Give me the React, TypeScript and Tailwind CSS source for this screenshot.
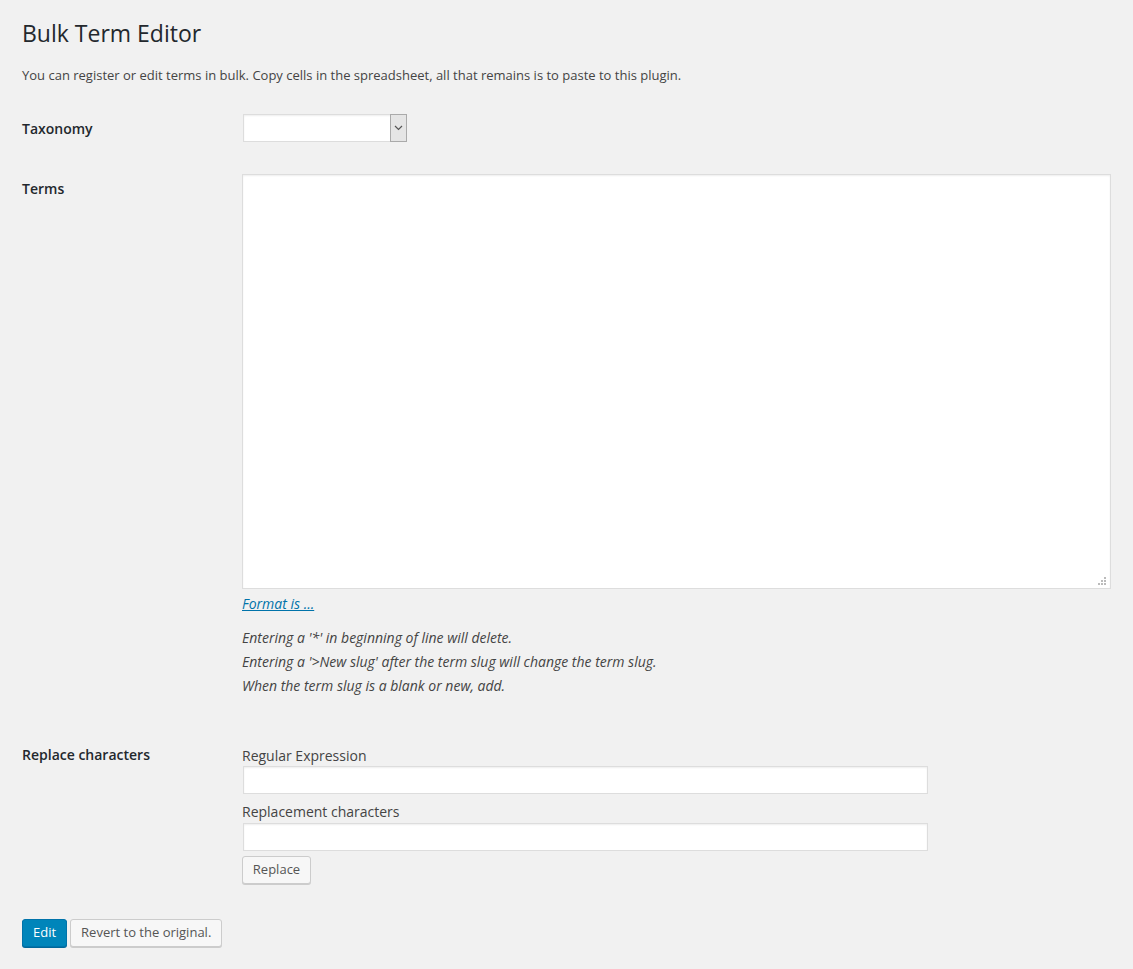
const labelCls = "w-[220px] shrink-0 text-[14px] font-semibold text-[#23282d]";

const App = () => {
  return (
    <div className="min-h-[969px] bg-[#f1f1f1] pl-[22px] pr-[22px] text-[#444] font-['Open_Sans',sans-serif] text-[13px]">
      <h1 className="pt-[19px] text-[23px] leading-[29px] font-normal text-[#23282d]">
        Bulk Term Editor
      </h1>
      <p className="mt-[17px] leading-[20px]">
        You can register or edit terms in bulk. Copy cells in the spreadsheet,
        all that remains is to paste to this plugin.
      </p>

      <div className="mt-[29px] flex">
        <div className={labelCls + " pt-[4px]"}>Taxonomy</div>
        <div className="ml-px flex h-[28px] w-[164px] border border-[#ddd] bg-white shadow-[inset_0_1px_2px_rgba(0,0,0,0.07)]">
          <div className="flex-1" />
          <div className="flex w-[17px] items-center justify-center border border-[#aaa] bg-[#e5e5e5] -my-px -mr-px">
            <svg width="9" height="6" viewBox="0 0 9 6">
              <path d="M1 1 L4.5 4.5 L8 1" stroke="#555" strokeWidth="1.2" fill="none" />
            </svg>
          </div>
        </div>
      </div>

      <div className="mt-[32px] flex">
        <div className={labelCls + " pt-[4px]"}>Terms</div>
        <div className="flex-1">
          <div className="relative h-[415px] w-[869px] border border-[#ddd] bg-white shadow-[inset_0_1px_2px_rgba(0,0,0,0.07)]">
            <svg className="absolute right-[3px] bottom-[2px]" width="9" height="9" viewBox="0 0 9 9">
              <rect x="6" y="0" width="2" height="2" fill="#bbb" />
              <rect x="3" y="3" width="2" height="2" fill="#bbb" />
              <rect x="6" y="3" width="2" height="2" fill="#bbb" />
              <rect x="0" y="6" width="2" height="2" fill="#bbb" />
              <rect x="3" y="6" width="2" height="2" fill="#bbb" />
              <rect x="6" y="6" width="2" height="2" fill="#bbb" />
            </svg>
          </div>
          <a href="#" className="mt-[4px] inline-block text-[14px] italic leading-[22px] text-[#0073aa] underline">
            Format is ...
          </a>
          <div className="mt-[11px] text-[14px] italic leading-[24px] text-[#444]">
            <p>Entering a '*' in beginning of line will delete.</p>
            <p>Entering a '&gt;New slug' after the term slug will change the term slug.</p>
            <p>When the term slug is a blank or new, add.</p>
          </div>
        </div>
      </div>

      <div className="mt-[47px] flex">
        <div className={labelCls + " -mt-px"}>Replace characters</div>
        <div className="flex flex-col">
          <label className="pt-px text-[14px] leading-[20px] text-[#444]">Regular Expression</label>
          <div className="ml-px h-[28px] w-[685px] border border-[#ddd] bg-white shadow-[inset_0_1px_2px_rgba(0,0,0,0.07)]" />
          <label className="mt-[8px] text-[14px] leading-[20px] text-[#444]">Replacement characters</label>
          <div className="ml-px mt-[1px] h-[28px] w-[685px] border border-[#ddd] bg-white shadow-[inset_0_1px_2px_rgba(0,0,0,0.07)]" />
          <button className="mt-[5px] h-[28px] w-[69px] rounded-[3px] border border-[#ccc] bg-[#f7f7f7] text-[13px] text-[#555] shadow-[0_1px_0_#ccc]">
            Replace
          </button>
        </div>
      </div>

      <div className="mt-[35px] flex gap-[3px]">
        <button className="h-[28px] rounded-[3px] border border-[#0073aa] bg-[#0085ba] px-[10px] text-[13px] text-white shadow-[0_1px_0_#006799]">
          Edit
        </button>
        <button className="h-[28px] rounded-[3px] border border-[#ccc] bg-[#f7f7f7] px-[10px] text-[13px] text-[#555] shadow-[0_1px_0_#ccc]">
          Revert to the original.
        </button>
      </div>
    </div>
  );
};

export default App;
